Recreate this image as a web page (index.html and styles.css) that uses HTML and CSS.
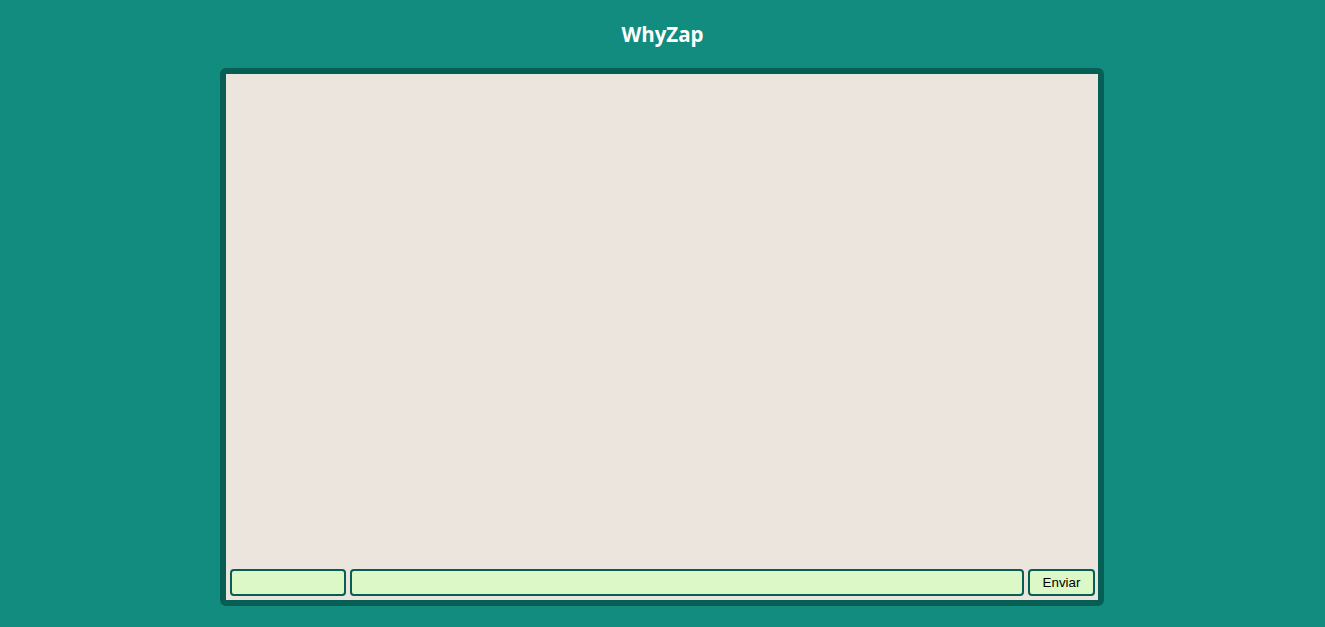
FILE: index.html
```html
<!DOCTYPE html>
<html lang="pt">
<head>
<meta charset="utf-8">
<title>WhyZap</title>
<link rel="stylesheet" href="styles.css">
</head>
<body>
  <header class="topbar">
    <h1 class="title">WhyZap</h1>
  </header>
  <main class="chat">
    <div class="messages"></div>
    <form class="composer">
      <input class="field field-name" type="text">
      <input class="field field-message" type="text">
      <button class="send" type="button">Enviar</button>
    </form>
  </main>
</body>
</html>
```
FILE: styles.css
```css
* { box-sizing: border-box; }
html, body { margin: 0; padding: 0; }
body {
  background: #128C7E;
  font-family: "Open Sans", "Liberation Sans", sans-serif;
  height: 627px;
}
.topbar {
  height: 68px;
  display: flex;
  align-items: center;
  justify-content: center;
}
.title {
  margin: 0;
  color: #ffffff;
  font-size: 20.5px;
  font-weight: 700;
  line-height: 1;
}
.chat {
  height: 538px;
  margin: 0 221px 0 220px;
  border: 6px solid #075E54;
  border-radius: 6px;
  background: #ECE5DD;
  display: flex;
  flex-direction: column;
}
.messages { flex: 1; }
.composer {
  display: flex;
  gap: 4px;
  padding: 0 3px 4px 4px;
}
.field {
  height: 27px;
  border: 2px solid #075E54;
  border-radius: 4px;
  background: #DCF8C6;
  font: inherit;
  font-size: 13px;
  padding: 0 6px;
  outline: none;
}
.field-name { width: 116px; }
.field-message { flex: 1; min-width: 0; }
.send {
  width: 67px;
  height: 27px;
  border: 2px solid #075E54;
  border-radius: 4px;
  background: #DCF8C6;
  color: #000;
  font-family: "Liberation Sans", Arial, sans-serif;
  font-size: 13.33px;
  padding: 0;
  cursor: pointer;
}
```
